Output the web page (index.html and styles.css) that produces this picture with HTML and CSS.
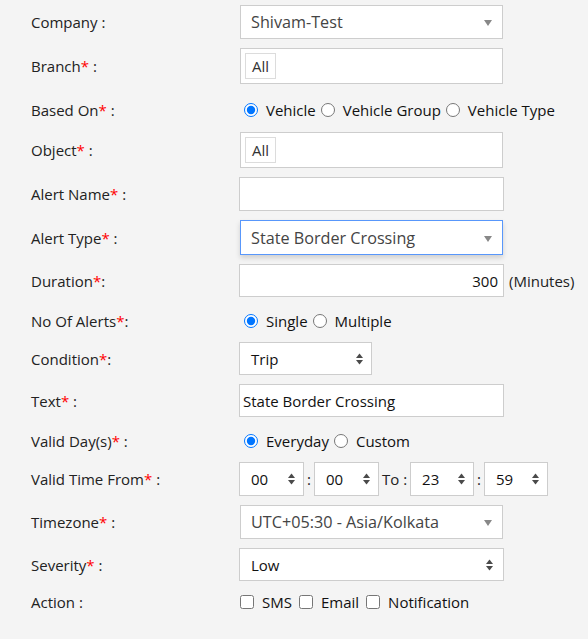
FILE: index.html
```html
<!DOCTYPE html>
<html>
<head>
<meta charset="utf-8">
<link rel="stylesheet" href="styles.css">
</head>
<body>
<div class="form">
  <div class="row">
    <div class="lbl">Company :</div>
    <div class="s2"><span>Shivam-Test</span><span class="s2-arrow"></span></div>
  </div>
  <div class="row">
    <div class="lbl">Branch<span class="req">*</span> :</div>
    <div class="multi"><span class="tag">All</span></div>
  </div>
  <div class="row radio-row first">
    <div class="lbl">Based On<span class="req">*</span> :</div>
    <div class="opts">
      <label class="opt"><input type="radio" name="based" checked>Vehicle</label>
      <label class="opt"><input type="radio" name="based">Vehicle Group</label>
      <label class="opt"><input type="radio" name="based">Vehicle Type</label>
    </div>
  </div>
  <div class="row">
    <div class="lbl">Object<span class="req">*</span> :</div>
    <div class="multi"><span class="tag">All</span></div>
  </div>
  <div class="row">
    <div class="lbl">Alert Name<span class="req">*</span> :</div>
    <div class="inp tall"></div>
  </div>
  <div class="row">
    <div class="lbl">Alert Type<span class="req">*</span> :</div>
    <div class="s2 focus"><span>State Border Crossing</span><span class="s2-arrow"></span></div>
  </div>
  <div class="row">
    <div class="lbl">Duration<span class="req">*</span>:</div>
    <div class="inp num">300</div>
    <span class="unit">(Minutes)</span>
  </div>
  <div class="row radio-row">
    <div class="lbl">No Of Alerts<span class="req">*</span>:</div>
    <div class="opts">
      <label class="opt"><input type="radio" name="num" checked>Single</label>
      <label class="opt"><input type="radio" name="num">Multiple</label>
    </div>
  </div>
  <div class="row">
    <div class="lbl">Condition<span class="req">*</span>:</div>
    <div class="sel cond"><span>Trip</span><svg class="spin" width="7" height="12" viewBox="0 0 7 12"><polygon points="0,5 3.5,0.5 7,5"/><polygon points="0,7 3.5,11.5 7,7"/></svg></div>
  </div>
  <div class="row">
    <div class="lbl">Text<span class="req">*</span> :</div>
    <div class="inp">State Border Crossing</div>
  </div>
  <div class="row radio-row">
    <div class="lbl">Valid Day(s)<span class="req">*</span> :</div>
    <div class="opts">
      <label class="opt"><input type="radio" name="day" checked>Everyday</label>
      <label class="opt"><input type="radio" name="day">Custom</label>
    </div>
  </div>
  <div class="row">
    <div class="lbl">Valid Time From<span class="req">*</span> :</div>
    <div class="time">
      <div class="sel tbox"><span>00</span><svg class="spin" width="7" height="12" viewBox="0 0 7 12"><polygon points="0,5 3.5,0.5 7,5"/><polygon points="0,7 3.5,11.5 7,7"/></svg></div>
      <span>:</span>
      <div class="sel tbox"><span>00</span><svg class="spin" width="7" height="12" viewBox="0 0 7 12"><polygon points="0,5 3.5,0.5 7,5"/><polygon points="0,7 3.5,11.5 7,7"/></svg></div>
      <span>To :</span>
      <div class="sel tbox narrow"><span>23</span><svg class="spin" width="7" height="12" viewBox="0 0 7 12"><polygon points="0,5 3.5,0.5 7,5"/><polygon points="0,7 3.5,11.5 7,7"/></svg></div>
      <span>:</span>
      <div class="sel tbox narrow"><span>59</span><svg class="spin" width="7" height="12" viewBox="0 0 7 12"><polygon points="0,5 3.5,0.5 7,5"/><polygon points="0,7 3.5,11.5 7,7"/></svg></div>
    </div>
  </div>
  <div class="row">
    <div class="lbl">Timezone<span class="req">*</span> :</div>
    <div class="s2"><span>UTC+05:30 - Asia/Kolkata</span><span class="s2-arrow"></span></div>
  </div>
  <div class="row">
    <div class="lbl">Severity<span class="req">*</span> :</div>
    <div class="sel sev"><span>Low</span><svg class="spin" width="7" height="12" viewBox="0 0 7 12"><polygon points="0,5 3.5,0.5 7,5"/><polygon points="0,7 3.5,11.5 7,7"/></svg></div>
  </div>
  <div class="row check-row">
    <div class="lbl">Action :</div>
    <div class="checks">
      <label class="opt"><input type="checkbox">SMS</label>
      <label class="opt"><input type="checkbox">Email</label>
      <label class="opt"><input type="checkbox">Notification</label>
    </div>
  </div>
</div>
</body>
</html>
```
FILE: styles.css
```css
html, body {
  margin: 0;
  background: #f4f4f4;
}
body {
  font-family: "Open Sans", "DejaVu Sans", sans-serif;
  font-size: 15px;
  color: #222;
}
.form {
  display: flex;
  flex-direction: column;
  gap: 9px;
  padding: 5px 0 0 31px;
}
.row {
  display: flex;
  align-items: center;
}
.lbl {
  width: 208px;
  flex: none;
}
.req {
  color: #ff0000;
}
.s2 {
  box-sizing: border-box;
  width: 263px;
  height: 34px;
  margin-left: 1px;
  background: #fff;
  border: 1px solid #cdcdcd;
  display: flex;
  align-items: center;
  justify-content: space-between;
  padding: 0 10px 0 10px;
  color: #444;
  font-size: 16.2px;
}
.s2.focus {
  height: 35px;
  border-color: #5897fb;
  box-shadow: 0 3px 5px rgba(0, 0, 0, 0.15);
}
.s2-arrow {
  width: 0;
  height: 0;
  border-style: solid;
  border-width: 6px 4px 0 4px;
  border-color: #888 transparent transparent transparent;
  margin-top: 2px;
}
.multi {
  box-sizing: border-box;
  width: 263px;
  height: 36px;
  margin-left: 1px;
  background: #fff;
  border: 1px solid #cdcdcd;
  padding: 4px;
  display: flex;
  align-items: center;
}
.tag {
  box-sizing: border-box;
  height: 26px;
  padding: 0 6px;
  border: 1px solid #dcdcdc;
  display: flex;
  align-items: center;
  color: #333;
}
.inp {
  box-sizing: border-box;
  width: 265px;
  height: 33px;
  background: #fff;
  border: 1px solid #cdcdcd;
  padding: 0 3px;
  display: flex;
  align-items: center;
  color: #111;
}
.inp.tall {
  height: 34px;
}
.inp.num {
  justify-content: flex-end;
  padding-right: 5px;
}
.unit {
  margin-left: 5px;
}
.sel {
  box-sizing: border-box;
  height: 33px;
  background: #fff;
  border: 1px solid #cdcdcd;
  padding: 0 8px 0 11px;
  display: flex;
  align-items: center;
  justify-content: space-between;
  color: #111;
}
.sel.cond {
  width: 133px;
}
.sel.sev {
  width: 265px;
  padding-right: 10px;
}
.spin {
  fill: #4a4a4a;
  flex: none;
}
.time {
  display: flex;
  align-items: center;
  gap: 3px;
}
.sel.tbox {
  width: 65px;
  height: 34px;
}
.sel.tbox.narrow {
  width: 64px;
}
.radio-row {
  box-sizing: border-box;
  height: 27px;
  padding-top: 3px;
}
.radio-row.first {
  height: 30px;
}
.check-row {
  height: 24px;
}
.opts, .checks {
  display: flex;
  align-items: center;
  gap: 0;
}
.checks {
  gap: 6px;
}
.opt {
  display: flex;
  align-items: center;
  color: #111;
}
.opt input[type="radio"] {
  width: 14px;
  height: 14px;
  margin: 0 8px 0 5px;
}
.opt input[type="checkbox"] {
  width: 14px;
  height: 14px;
  margin: 0 8px 0 1px;
}
```
